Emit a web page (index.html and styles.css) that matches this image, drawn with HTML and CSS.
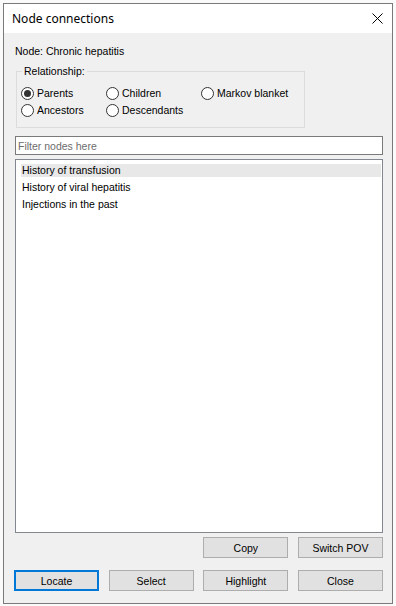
FILE: index.html
```html
<!DOCTYPE html>
<html>
<head>
<meta charset="utf-8">
<link rel="stylesheet" href="styles.css">
</head>
<body>
<div class="window">
  <div class="titlebar">
    <span class="title">Node connections</span>
    <svg class="close" width="11" height="11" viewBox="0 0 11 11"><path d="M0.5 0.5 L10.5 10.5 M10.5 0.5 L0.5 10.5" stroke="#000" stroke-width="1" fill="none"/></svg>
  </div>
  <div class="content">
    <div class="node-label">Node: Chronic hepatitis</div>
    <fieldset class="group">
      <legend class="group-title">Relationship:</legend>
      <div class="radios">
        <label class="radio"><span class="dot checked"></span>Parents</label>
        <label class="radio"><span class="dot"></span>Children</label>
        <label class="radio"><span class="dot"></span>Markov blanket</label>
        <label class="radio"><span class="dot"></span>Ancestors</label>
        <label class="radio"><span class="dot"></span>Descendants</label>
      </div>
    </fieldset>
    <input class="filter" type="text" placeholder="Filter nodes here">
    <div class="list">
      <div class="item selected">History of transfusion</div>
      <div class="item">History of viral hepatitis</div>
      <div class="item">Injections in the past</div>
    </div>
    <div class="buttons top">
      <button class="btn col3">Copy</button>
      <button class="btn col4">Switch POV</button>
    </div>
    <div class="buttons bottom">
      <button class="btn focused">Locate</button>
      <button class="btn">Select</button>
      <button class="btn">Highlight</button>
      <button class="btn">Close</button>
    </div>
  </div>
</div>
</body>
</html>
```
FILE: styles.css
```css
html, body {
  margin: 0;
  padding: 0;
}
body {
  background: #fafafa;
  padding: 3px;
  font-family: "Liberation Sans", Arial, sans-serif;
  font-size: 10.5px;
  color: #000;
}
.window {
  box-sizing: border-box;
  width: 390px;
  height: 601px;
  border: 1px solid #7a7a7a;
  display: flex;
  flex-direction: column;
  background: #f0f0f0;
}
.titlebar {
  height: 29px;
  flex: none;
  background: #fff;
  display: flex;
  align-items: center;
  padding-left: 8px;
  padding-right: 9px;
}
.title {
  font-family: "Noto Sans", "Open Sans", sans-serif;
  font-size: 12px;
  flex: 1;
}
.close {
  display: block;
}
.content {
  flex: 1;
  display: flex;
  flex-direction: column;
  padding: 12px 9px 12px 11px;
  min-height: 0;
}
.node-label {
  line-height: 13px;
  height: 13px;
}
.group {
  box-sizing: border-box;
  margin: 7px 0 0 1px;
  width: 289px;
  border: 1px solid #dcdcdc;
  padding: 0;
  min-width: 0;
}
.group-title {
  margin-left: 5px;
  padding: 0 2px;
  line-height: 13px;
  height: 13px;
}
.radios {
  display: grid;
  grid-template-columns: 85px 95px auto;
  grid-template-rows: 16px 16px;
  row-gap: 1px;
  padding: 7px 0 9px 4px;
}
.radio {
  display: flex;
  align-items: center;
  line-height: 16px;
  white-space: nowrap;
}
.dot {
  box-sizing: border-box;
  width: 13px;
  height: 13px;
  border: 1px solid #333;
  border-radius: 50%;
  background: #fff;
  margin-right: 3px;
  display: flex;
  align-items: center;
  justify-content: center;
  flex: none;
}
.dot.checked::after {
  content: "";
  width: 7px;
  height: 7px;
  border-radius: 50%;
  background: #333;
}
.filter {
  box-sizing: border-box;
  margin: 8px 0 0 0;
  height: 19px;
  width: 100%;
  border: 1px solid #7a7a7a;
  padding: 0 2px;
  font-family: "Liberation Sans", Arial, sans-serif;
  font-size: 10.5px;
  background: #fff;
  outline: none;
  flex: none;
}
.filter::placeholder {
  color: #6d6d6d;
}
.list {
  box-sizing: border-box;
  margin-top: 4px;
  flex: 1;
  min-height: 0;
  border: 1px solid #828790;
  background: #fff;
  padding: 4px 1px 0 5px;
  display: flex;
  flex-direction: column;
  gap: 4px;
}
.item {
  height: 13px;
  line-height: 13px;
  padding-left: 1px;
  white-space: nowrap;
}
.item.selected {
  background: #e8e8e8;
}
.buttons {
  display: grid;
  grid-template-columns: repeat(4, 85px);
  justify-content: space-between;
  margin-left: -1px;
  flex: none;
}
.buttons.top {
  margin-top: 4px;
}
.buttons.bottom {
  margin-top: 12px;
}
.col3 { grid-column: 3; }
.col4 { grid-column: 4; }
.btn {
  box-sizing: border-box;
  height: 21px;
  margin: 0;
  padding: 0;
  border: 1px solid #adadad;
  background: #e1e1e1;
  font-family: "Liberation Sans", Arial, sans-serif;
  font-size: 10.5px;
  color: #000;
}
.btn.focused {
  border: 2px solid #0078d7;
}
```
